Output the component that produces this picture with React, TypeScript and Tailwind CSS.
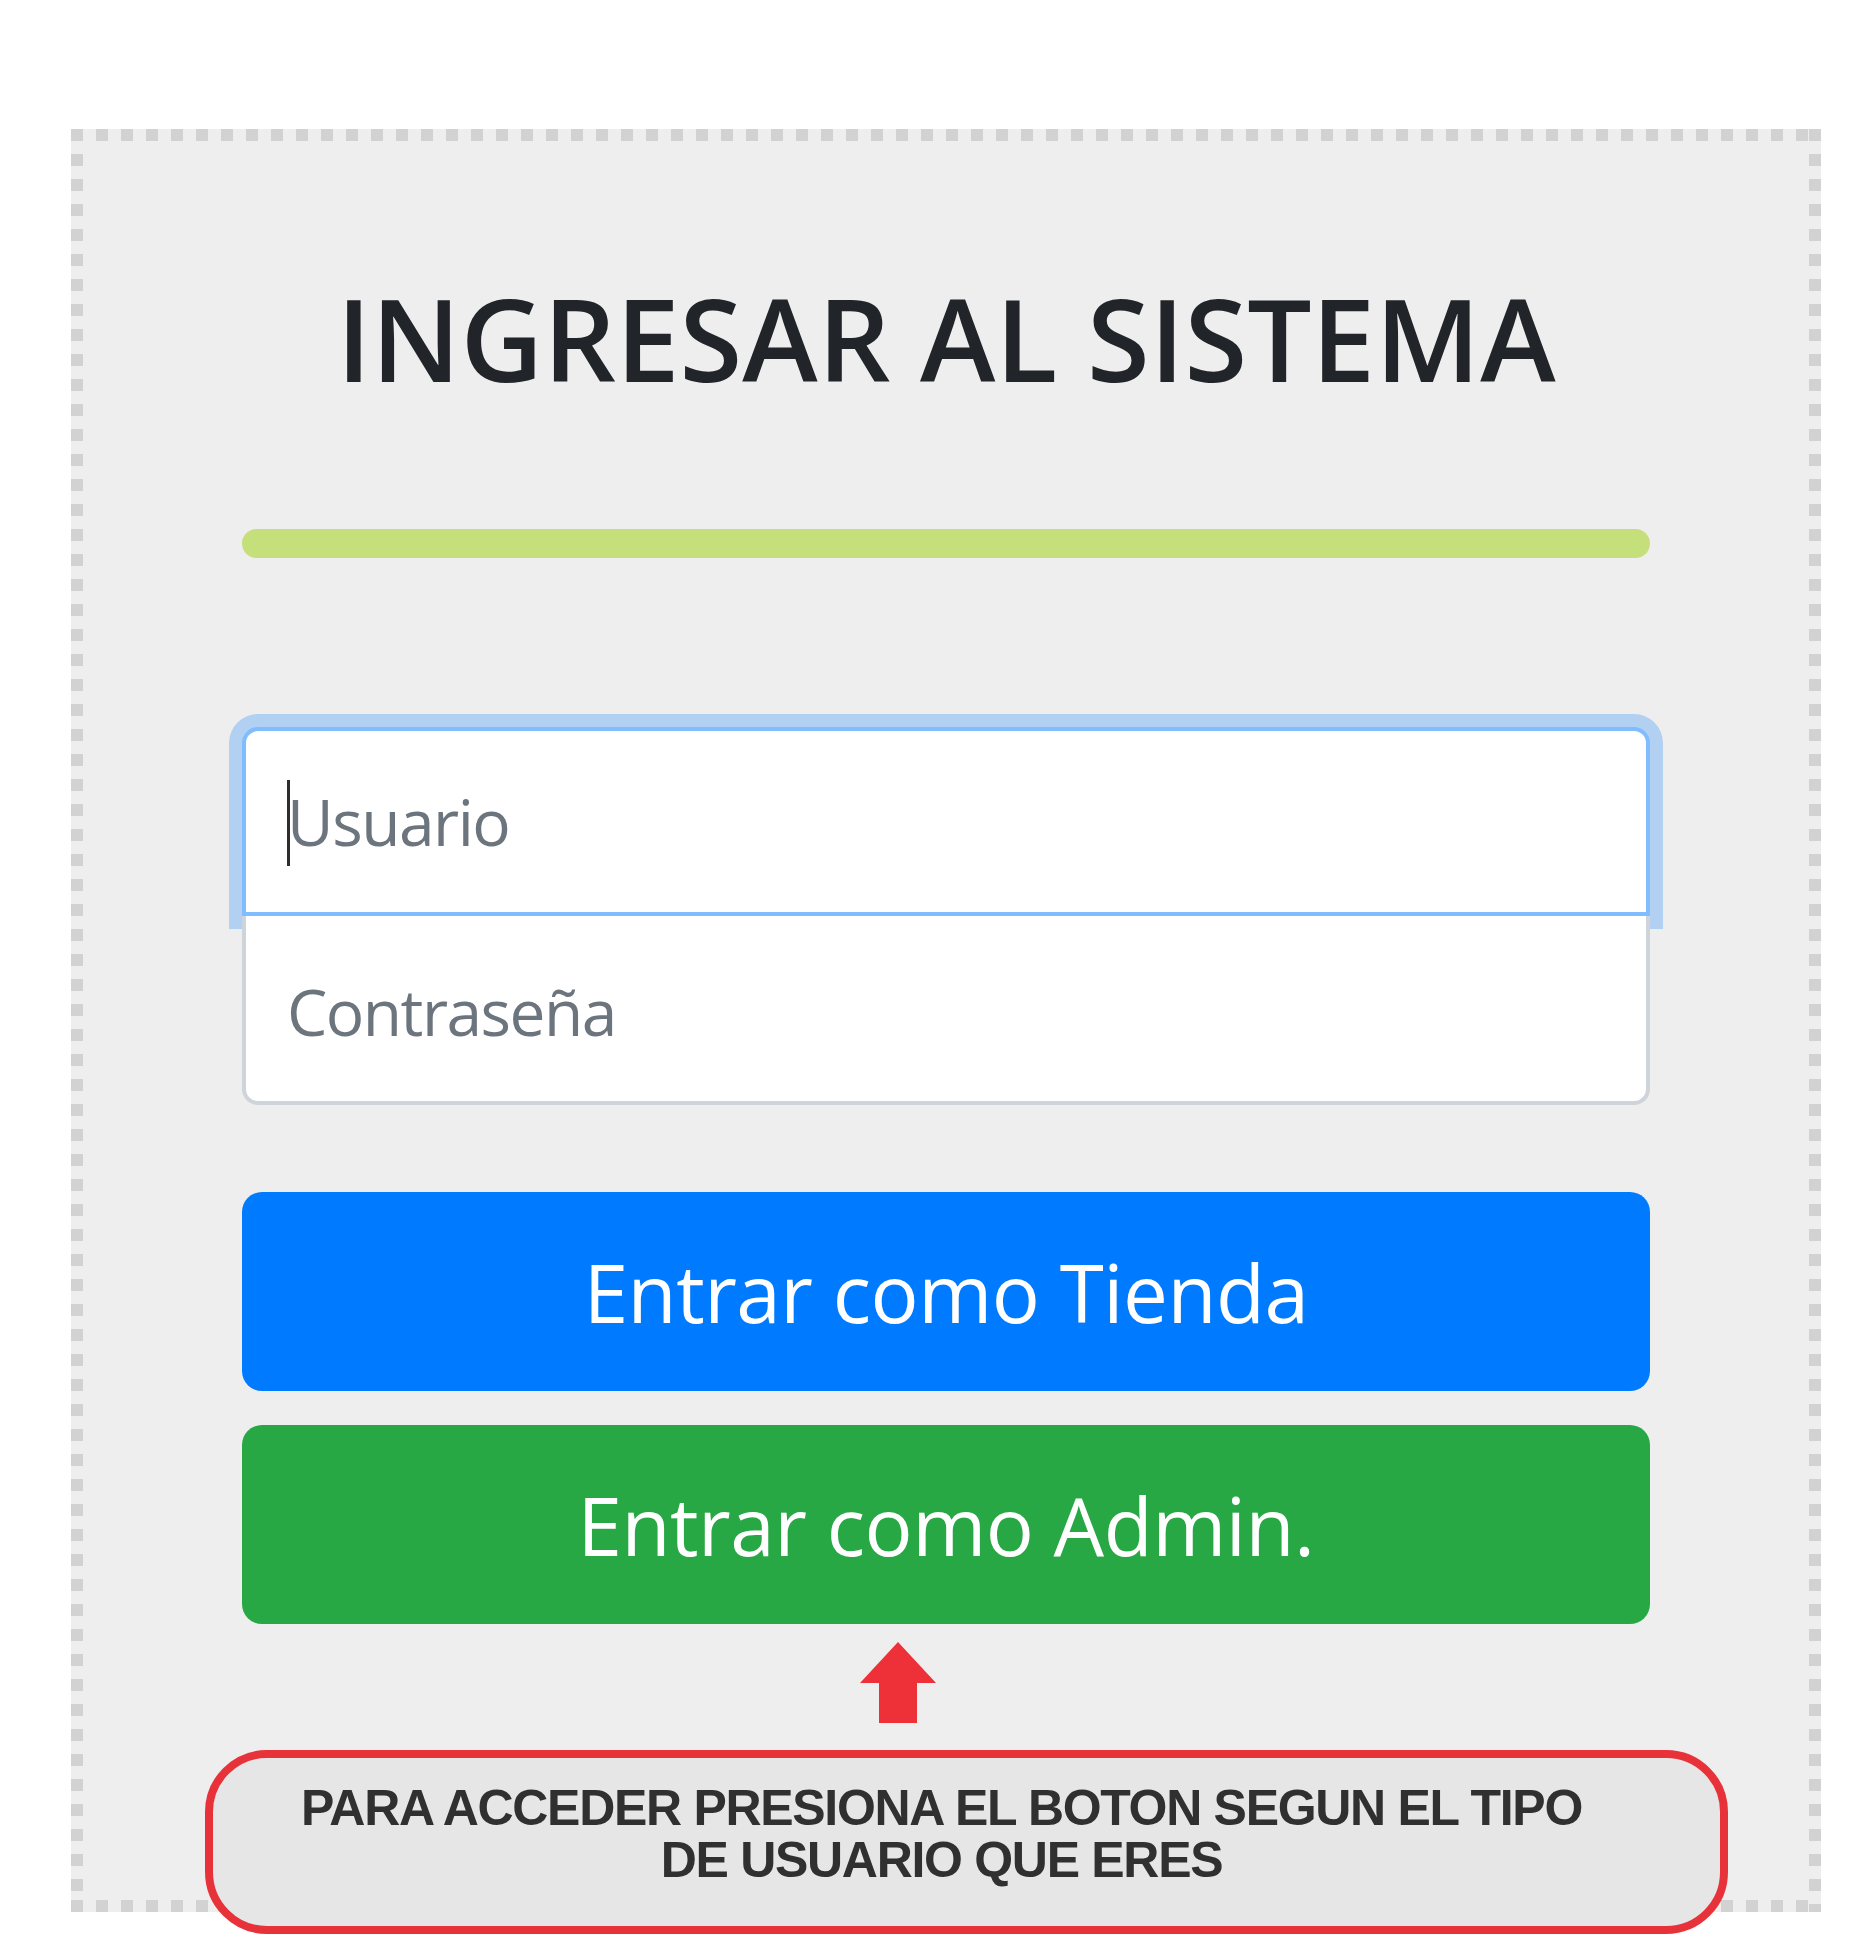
import React from 'react';

const sans = { fontFamily: '"Open Sans", "Noto Sans", sans-serif' };

function UpArrow() {
  return (
    <svg width="76" height="81" viewBox="0 0 76 81" className="block">
      <path d="M38 0 L76 41 L57 41 L57 81 L19 81 L19 41 L0 41 Z" fill="#ee3138" />
    </svg>
  );
}

export default function App() {
  return (
    <div className="relative min-h-[1950px] bg-white" style={sans}>
      <div className="pt-[129px] pl-[71px]">
        <div className="flex h-[1783px] w-[1750px] flex-col items-center pt-[139px] [background:linear-gradient(90deg,#d2d2d2_12px,transparent_12px)_top_left/25px_12px_repeat-x,linear-gradient(90deg,#d2d2d2_12px,transparent_12px)_bottom_left/25px_12px_repeat-x,linear-gradient(#d2d2d2_12px,transparent_12px)_top_left/12px_25px_repeat-y,linear-gradient(#d2d2d2_12px,transparent_12px)_top_right/12px_25px_repeat-y,#eeeeee]">
          <h1 className="text-[114px] leading-[1.22] font-semibold text-[#212529] font-['Open_Sans',sans-serif]">
            INGRESAR AL SISTEMA
          </h1>

          <div className="mt-[122px] h-[29px] w-[1408px] rounded-full bg-[#c5e07b]" />

          <form className="mt-[169px] flex w-[1408px] flex-col">
            <div className="relative z-0">
              <input
                type="text"
                placeholder="Usuario"
                className="block h-[189px] w-full rounded-t-[16px] border-[4px] border-[#80bdff] bg-white pl-[41px] text-[64px] tracking-[-1.5px] text-[#495057] outline-none shadow-[0_0_0_13px_rgba(0,123,255,0.25)] placeholder:text-[#6c757d] font-['Open_Sans',sans-serif]"
              />
              <span className="absolute left-[45px] top-[53px] h-[86px] w-[3px] bg-[#2d2d2d]" />
            </div>
            <input
              type="password"
              placeholder="Contraseña"
              className="relative z-10 block h-[189px] w-full rounded-b-[16px] border-[4px] border-t-0 border-[#ced4da] bg-white pl-[41px] pt-[6px] text-[64px] tracking-[-1.5px] text-[#495057] outline-none placeholder:text-[#6c757d] font-['Open_Sans',sans-serif]"
            />

            <button
              type="button"
              className="mt-[87px] h-[199px] w-full rounded-[20px] bg-[#007bff] text-[80px] tracking-[-0.5px] text-white font-['Open_Sans',sans-serif]"
            >
              Entrar como Tienda
            </button>
            <button
              type="button"
              className="mt-[34px] h-[199px] w-full rounded-[20px] bg-[#28a745] text-[80px] tracking-[-0.5px] text-white font-['Open_Sans',sans-serif]"
            >
              Entrar como Admin.
            </button>
          </form>
        </div>
      </div>

      <div className="absolute left-[860px] top-[1642px]">
        <UpArrow />
      </div>

      <div className="absolute left-[205px] top-[1750px] flex h-[184px] w-[1523px] flex-col items-center justify-start rounded-[62px] border-[8px] border-[#e8323a] bg-[#e6e6e6] pr-[50px] pt-[24px]">
        <p className="text-center text-[50px] leading-[52px] font-bold tracking-[-1.3px] text-[#303030] font-['Liberation_Sans',Arial,sans-serif]">
          PARA ACCEDER PRESIONA EL BOTON SEGUN EL TIPO
          <br />
          DE USUARIO QUE ERES
        </p>
      </div>
    </div>
  );
}
